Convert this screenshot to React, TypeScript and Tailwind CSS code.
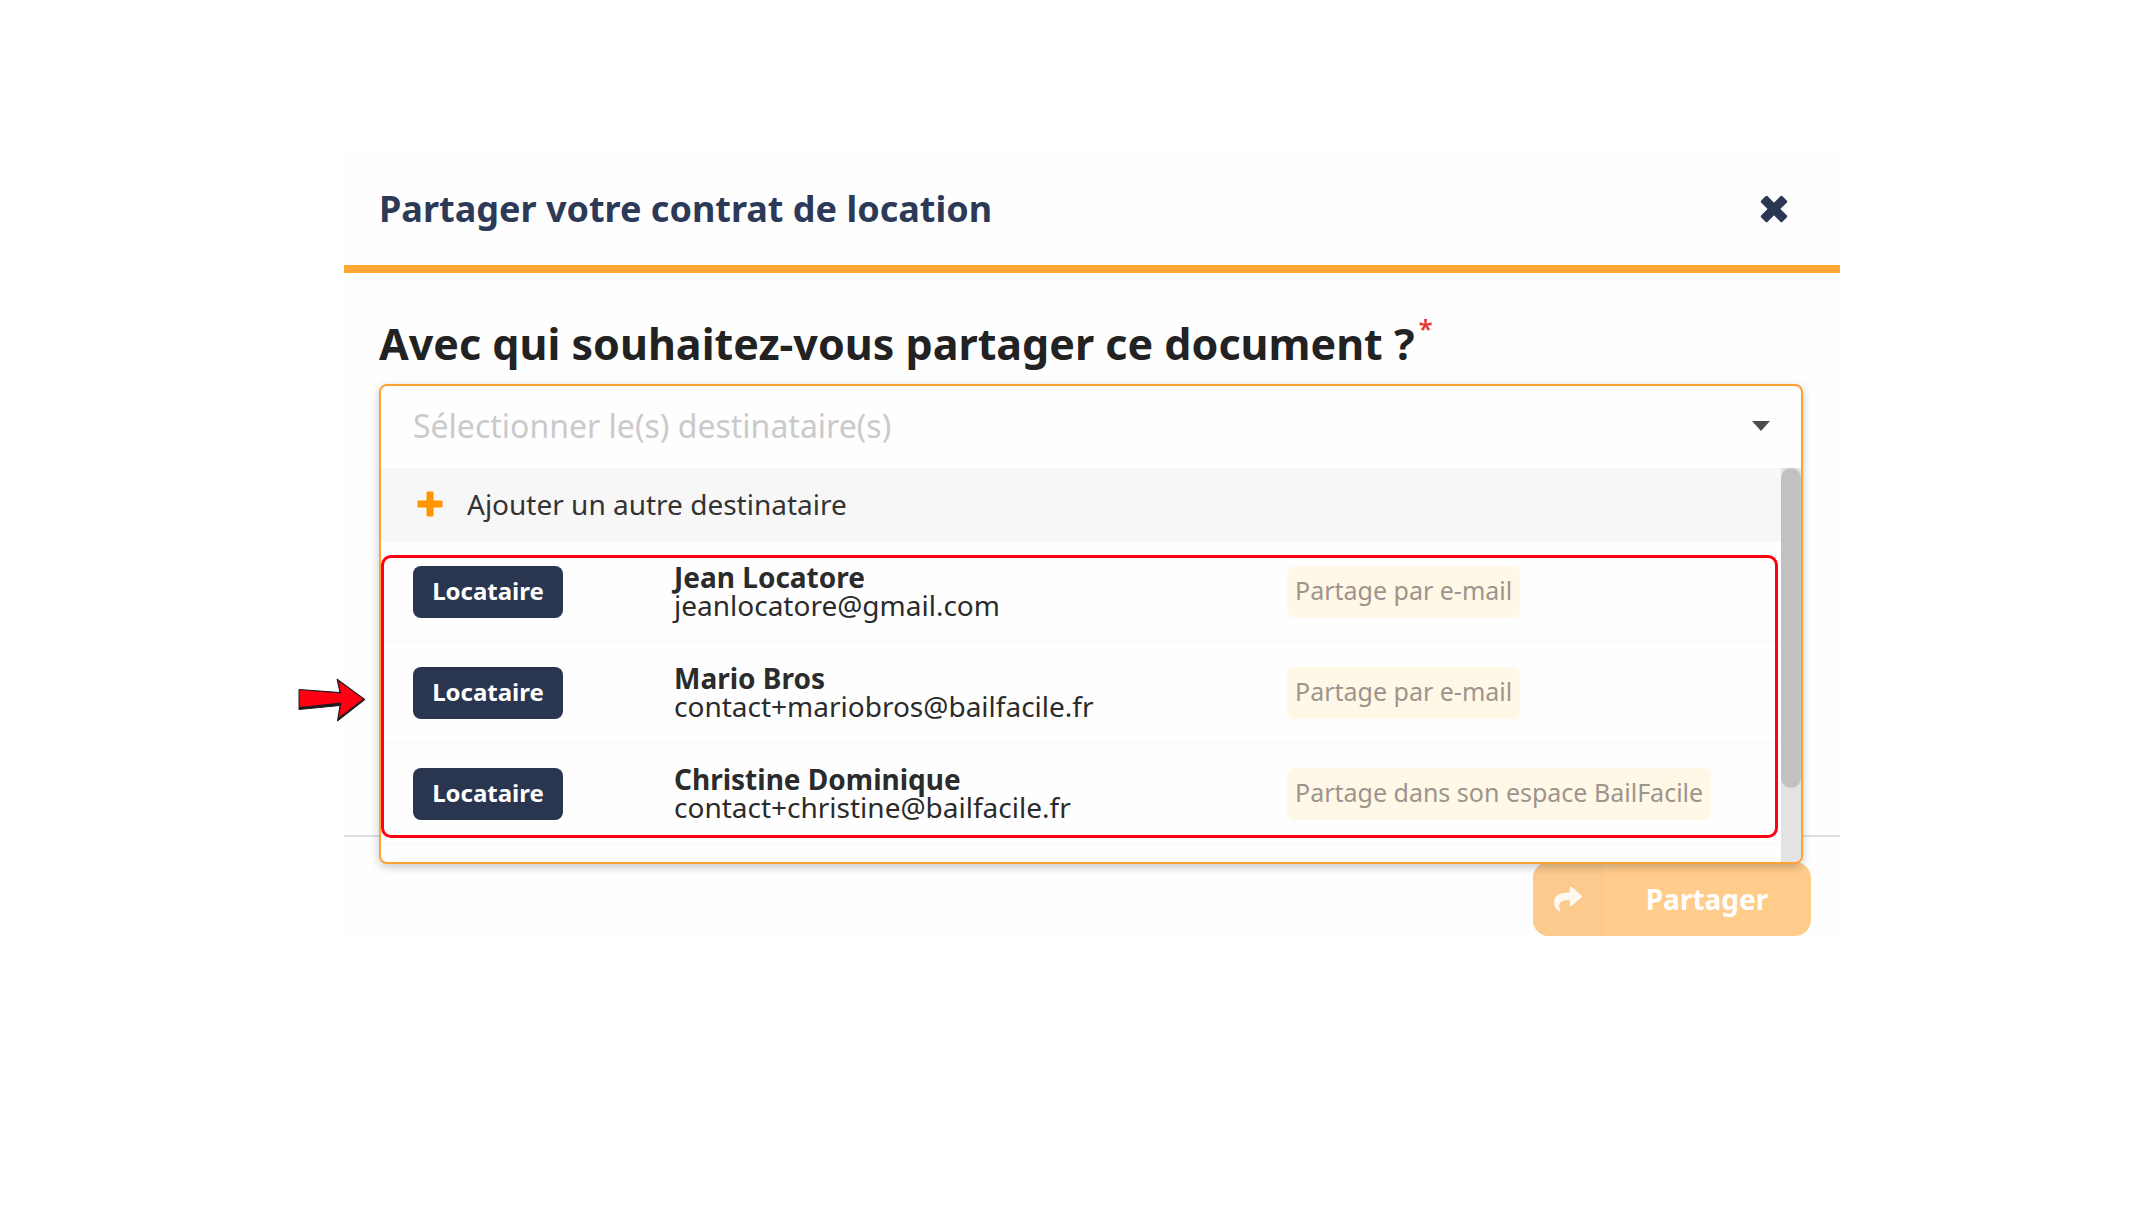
import { FaShare } from 'react-icons/fa';

type Recipient = { name: string; email: string; role: string; channel: string };

const recipients: Recipient[] = [
  { name: 'Jean Locatore', email: 'jeanlocatore@gmail.com', role: 'Locataire', channel: 'Partage par e-mail' },
  { name: 'Mario Bros', email: 'contact+mariobros@bailfacile.fr', role: 'Locataire', channel: 'Partage par e-mail' },
  {
    name: 'Christine Dominique',
    email: 'contact+christine@bailfacile.fr',
    role: 'Locataire',
    channel: 'Partage dans son espace BailFacile',
  },
];

function CloseIcon() {
  return (
    <svg viewBox="0 0 28 28" className="size-7" aria-hidden="true">
      <g fill="currentColor" transform="rotate(45 14 14)">
        <rect x="-1" y="9.500" width="30" height="9" rx="1.500" />
        <rect x="9.500" y="-1" width="9" height="30" rx="1.500" />
      </g>
    </svg>
  );
}

function PlusIcon() {
  return (
    <svg viewBox="0 0 26 26" className="size-[26px] text-[#ff9600]" fill="currentColor" aria-hidden="true">
      <rect x="0.500" y="9.500" width="25" height="7" rx="1" />
      <rect x="9.500" y="0.500" width="7" height="25" rx="1" />
    </svg>
  );
}

function PointerArrow() {
  return (
    <svg viewBox="0 0 70 46" className="absolute -left-[84px] top-[291px] h-[46px] w-[70px]" aria-hidden="true">
      <path
        d="M2 12.500 43 15.500 40 2 68 22.500 40.500 44 43 28.500 2 32.500Z"
        fill="#1f1a1c"
        stroke="#1f1a1c"
        strokeWidth="1"
      />
      <path d="M2.500 13 44.200 16.500 41.200 4 66 22 41.800 40.500 44.500 25.500 2.500 30Z" fill="#ff0012" />
    </svg>
  );
}

function RecipientOption({ recipient }: { recipient: Recipient }) {
  return (
    <li
      role="option"
      aria-selected="false"
      className="grid h-[101px] shrink-0 grid-cols-[261fr_613fr_494fr] items-center border-b-2 border-[#fafafa] pl-8"
    >
      <span className="flex h-[52px] w-[150px] items-center justify-center rounded-lg bg-[#2a3650] pb-0.5 text-[24px] font-bold text-white">
        {recipient.role}
      </span>
      <span className="flex flex-col pb-0.5 leading-[28px] text-[#2b2b2b]">
        <span className="text-[28px] font-bold">{recipient.name}</span>
        <span className="text-[28px]">{recipient.email}</span>
      </span>
      <span className="flex h-[52px] items-center justify-self-start whitespace-nowrap rounded-lg bg-[#fff8e6] px-2 pb-0.5 text-[25px] text-[#9d948e]">
        {recipient.channel}
      </span>
    </li>
  );
}

function RecipientSelect() {
  return (
    <div className="relative mt-2 h-[84px]">
      <div className="absolute inset-x-0 top-0 z-10 rounded-lg border-2 border-[#ffa133] bg-[#fefefe] shadow-[0_3px_10px_rgba(0,0,0,0.22)]">
        <div className="flex h-[82px] items-center pb-0.5 pl-8 pr-7">
          <input
            id="recipients"
            type="text"
            role="combobox"
            aria-expanded="true"
            aria-controls="recipient-list"
            placeholder="Sélectionner le(s) destinataire(s)"
            className="min-w-0 flex-1 bg-transparent text-[32px] text-[#2b2b2b] outline-none placeholder:text-[#cacaca]"
          />
          <button type="button" aria-label="Ouvrir la liste" className="flex h-10 w-6 items-center justify-center">
            <svg viewBox="0 0 18 10" className="h-[10px] w-[18px]" aria-hidden="true">
              <path d="M0 0H18L9 10Z" fill="#4d4d4d" />
            </svg>
          </button>
        </div>
        <div className="flex h-[394px] overflow-hidden rounded-b-md">
          <ul id="recipient-list" role="listbox" aria-label="Destinataires" className="flex min-w-0 flex-1 flex-col">
            <li role="option" aria-selected="false" className="shrink-0">
              <button
                type="button"
                className="flex h-[74px] w-full items-center gap-6 bg-[#f7f7f7] pb-0.5 pl-9 text-[28px] text-[#333333]"
              >
                <PlusIcon />
                Ajouter un autre destinataire
              </button>
            </li>
            {recipients.map((recipient) => (
              <RecipientOption key={recipient.email} recipient={recipient} />
            ))}
          </ul>
          <div className="w-5 bg-[#e3e3e3]">
            <div className="h-80 rounded-full bg-[#c1c1c1]" />
          </div>
        </div>
        <div className="pointer-events-none absolute left-0 right-[23px] top-[169px] h-[283px] rounded-[10px] border-3 border-[#ff0014]" />
        <PointerArrow />
      </div>
    </div>
  );
}

export default function App() {
  return (
    <main className="min-h-screen bg-white pb-10 pl-[344px] pr-[296px] pt-[152px] font-['Noto_Sans','Open_Sans',sans-serif]">
      <section role="dialog" aria-labelledby="dialog-title" className="bg-[#fefefe]">
        <header className="flex h-[121px] items-center justify-between border-b-8 border-[#ffa733] pl-[35px] pr-[52px]">
          <h1 id="dialog-title" className="text-[36px] font-bold text-[#2c3a58]">
            Partager votre contrat de location
          </h1>
          <button type="button" aria-label="Fermer" className="text-[#2a3753]">
            <CloseIcon />
          </button>
        </header>
        <div className="h-[564px] border-b-2 border-[#dedede] pl-[35px] pr-[37px] pt-[39px]">
          <label htmlFor="recipients" className="flex h-16 items-center gap-1 text-[43px] font-bold text-[#222222]">
            Avec qui souhaitez-vous partager ce document ?
            <span className="self-start text-[26px] font-semibold leading-8 text-[#e53935]">*</span>
          </label>
          <RecipientSelect />
        </div>
        <footer className="flex justify-end pr-[29px] pt-[25px]">
          <button
            type="button"
            className="flex h-[74px] w-[278px] overflow-hidden rounded-2xl bg-[#ffcc8b] text-[28px] font-bold text-white"
          >
            <span className="flex h-full w-[70px] items-center justify-center bg-[#fbca8c]">
              <FaShare className="size-7 text-[#fff8ee]" />
            </span>
            <span className="flex h-full flex-1 items-center justify-center pb-px">Partager</span>
          </button>
        </footer>
      </section>
    </main>
  );
}
